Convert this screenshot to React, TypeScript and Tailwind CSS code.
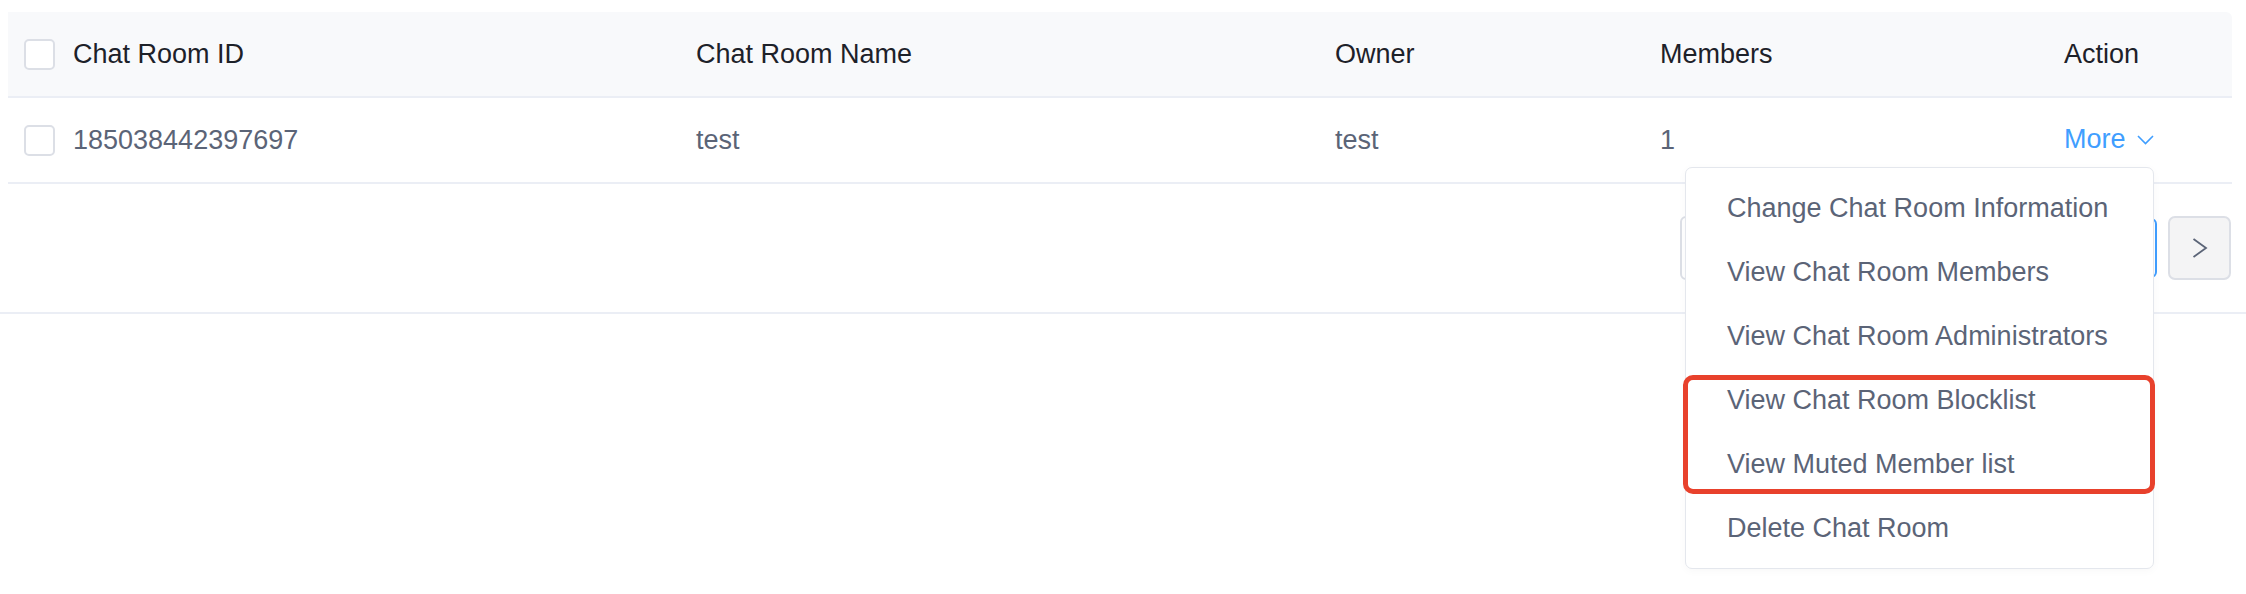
import React from "react";

const Checkbox = () => (
  <div className="w-[31px] h-[31px] shrink-0 rounded-[5px] border-2 border-[#dcdfe6] bg-white" />
);

const menuItems = [
  "Change Chat Room Information",
  "View Chat Room Members",
  "View Chat Room Administrators",
  "View Chat Room Blocklist",
  "View Muted Member list",
  "Delete Chat Room",
];

export default function App() {
  return (
    <div
      className="relative w-full h-[594px] bg-white overflow-hidden"
      style={{ fontFamily: '"Liberation Sans", Arial, sans-serif' }}
    >
      <div className="border-b-2 border-[#ebeef5]">
        <div className="pt-[12px] pl-[8px] pr-[14px]">
          {/* Header */}
          <div className="grid grid-cols-[688px_639px_325px_404px_1fr] h-[86px] bg-[#f8f9fb] border-b-2 border-[#ebeef5] rounded-tr-[6px] text-[27px] text-[#1d2129]">
            <div className="flex items-center pl-[16px] gap-[18px]">
              <Checkbox />
              <span>Chat Room ID</span>
            </div>
            <div className="flex items-center">Chat Room Name</div>
            <div className="flex items-center">Owner</div>
            <div className="flex items-center">Members</div>
            <div className="flex items-center">Action</div>
          </div>
          {/* Row */}
          <div className="grid grid-cols-[688px_639px_325px_404px_1fr] h-[86px] border-b-2 border-[#ebeef5] text-[27px] text-[#5b6477]">
            <div className="flex items-center pl-[16px] gap-[18px]">
              <Checkbox />
              <span>185038442397697</span>
            </div>
            <div className="flex items-center">test</div>
            <div className="flex items-center">test</div>
            <div className="flex items-center">1</div>
            <div className="flex items-center text-[#409eff] pb-[2px]">
              <span>More</span>
              <svg width="17" height="10" viewBox="0 0 17 10" className="ml-[11px] mt-[2px]">
                <polyline points="1,1 8.5,8.5 16,1" fill="none" stroke="#409eff" strokeWidth="1.6" />
              </svg>
            </div>
          </div>
        </div>
        {/* Pagination */}
        <div className="h-[128px] flex items-center justify-end pr-[15px]">
          <div className="w-[411px] h-[64px] rounded-[6px] border-2 border-[#dcdfe6] bg-white" />
          <div className="ml-[6px] w-[60px] h-[60px] rounded-[6px] border-2 border-[#409eff] bg-white" />
          <div className="ml-[11px] w-[63px] h-[64px] rounded-[7px] border-2 border-[#dcdfe6] bg-[#f4f4f5] flex items-center justify-center">
            <svg width="18" height="22" viewBox="0 0 18 22">
              <polyline points="2.5,2 15,11 2.5,20" fill="none" stroke="#5b6477" strokeWidth="1.8" />
            </svg>
          </div>
        </div>
      </div>

      {/* Dropdown menu */}
      <div className="absolute left-[1685px] top-[167px] w-[469px] rounded-[7px] border border-[#e4e7ed] bg-white py-[8px] shadow-[0_2px_8px_rgba(0,0,0,0.03)]">
        {menuItems.map((item) => (
          <div
            key={item}
            className="h-[64px] flex items-center pl-[41px] text-[27px] text-[#5b6477] whitespace-nowrap"
          >
            {item}
          </div>
        ))}
      </div>

      {/* Red highlight annotation */}
      <div className="absolute left-[1683px] top-[375px] w-[472px] h-[119px] rounded-[10px] border-[5px] border-[#e8412c] pointer-events-none" />
    </div>
  );
}
